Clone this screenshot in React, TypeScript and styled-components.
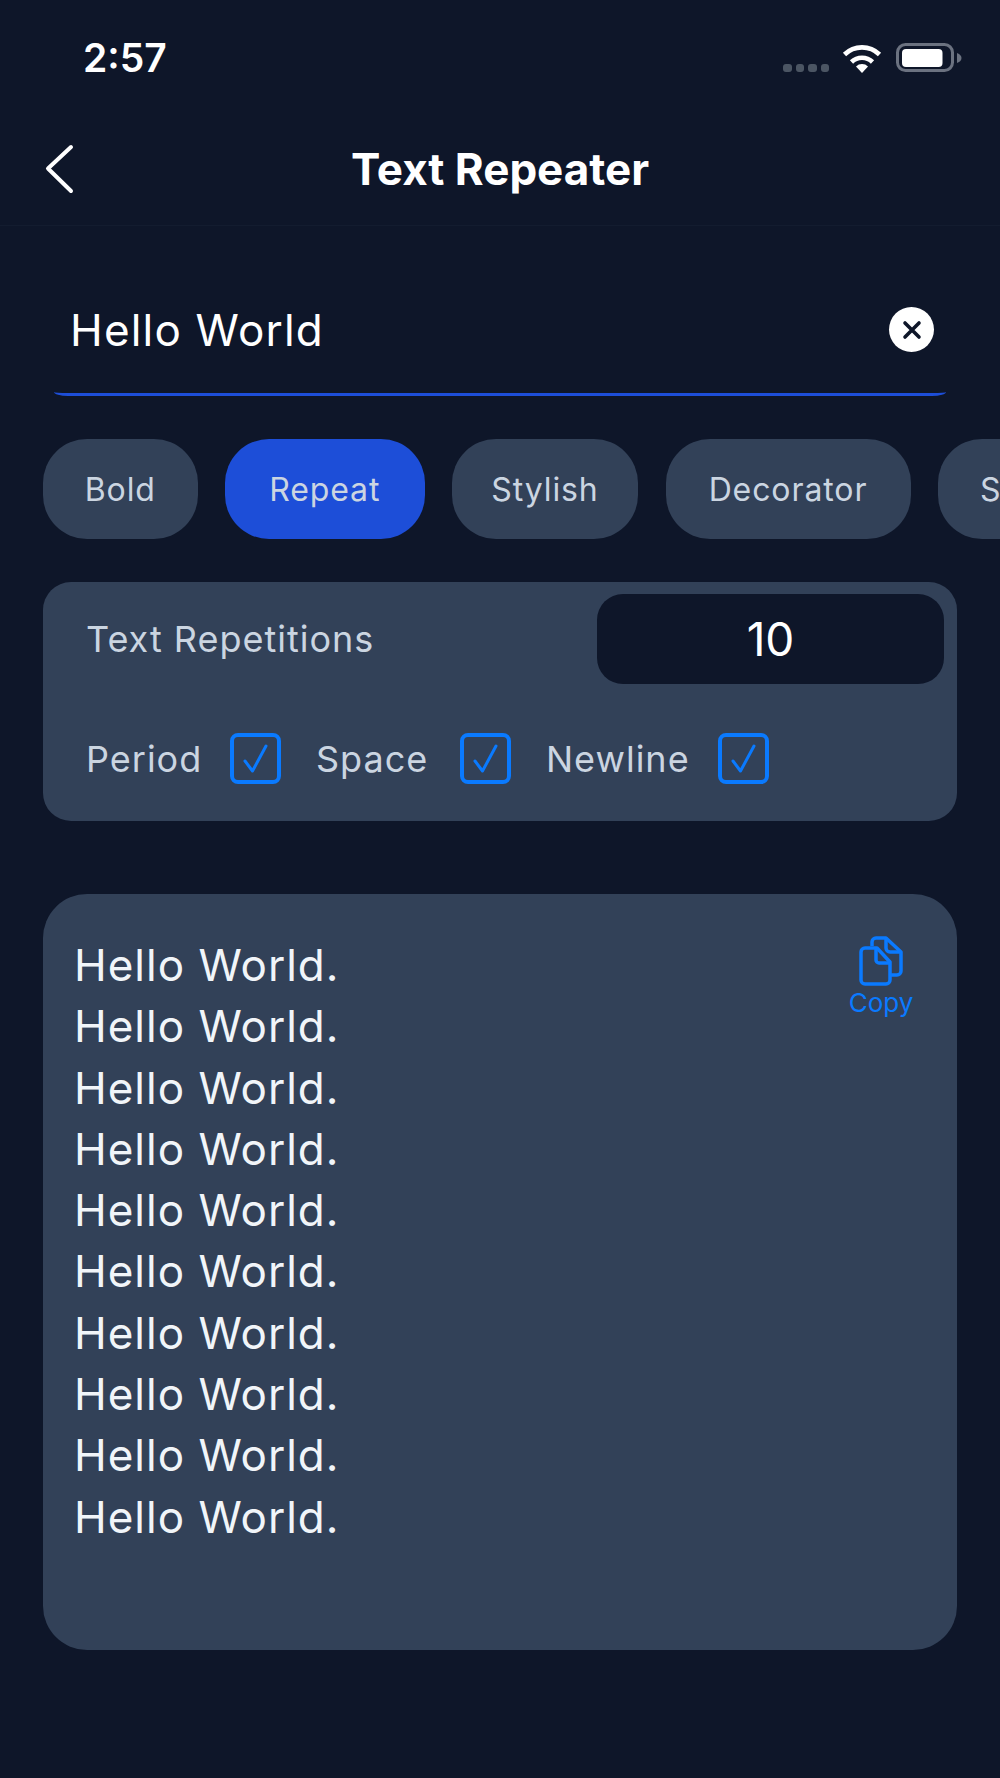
import React from 'react'
import styled, { createGlobalStyle } from 'styled-components'

const GlobalStyle = createGlobalStyle`
  html, body {
    margin: 0;
    padding: 0;
    background: #0e1629;
  }
  * {
    box-sizing: border-box;
  }
`

const bodyFont = `'Inter', 'Open Sans', sans-serif`
const systemFont = `'Inter', 'Liberation Sans', sans-serif`

const Screen = styled.div`
  width: 1000px;
  height: 1778px;
  overflow: hidden;
  background: #0e1629;
  font-family: ${bodyFont};
  font-weight: 400;
`

const StatusBar = styled.div`
  height: 116px;
  display: flex;
  justify-content: space-between;
  align-items: flex-start;
  padding: 36px 38px 0 83px;
`

const Time = styled.div`
  font-family: ${systemFont};
  font-weight: 600;
  font-size: 39px;
  line-height: 44px;
  color: #fff;
`

const StatusIcons = styled.div`
  display: flex;
  align-items: flex-end;
  padding-top: 7px;
`

const SignalDots = styled.div`
  display: flex;
  gap: 4px;
  margin-right: 13px;
  margin-bottom: 1px;
`

const Dot = styled.span`
  width: 8.5px;
  height: 8px;
  border-radius: 3px;
  background: #4b5563;
`

const NavBar = styled.div`
  height: 110px;
  position: relative;
  display: flex;
  align-items: center;
  justify-content: center;
  border-bottom: 1px solid #131c2f;
  padding-bottom: 4px;
`

const BackIcon = styled.svg`
  position: absolute;
  left: 44px;
  top: 28px;
`

const Title = styled.h1`
  margin: 0;
  font-family: ${systemFont};
  font-weight: 700;
  font-size: 44px;
  line-height: 50px;
  color: #fff;
`

const InputRow = styled.div`
  margin: 0 54px;
  height: 170px;
  padding: 73px 12px 0 16px;
  display: flex;
  align-items: flex-start;
  justify-content: space-between;
  border-bottom: 3px solid #1d4ed8;
  border-radius: 0 0 14px 14px / 0 0 4px 4px;
`

const InputText = styled.div`
  font-size: 44px;
  line-height: 62px;
  letter-spacing: 1.2px;
  color: #fff;
`

const ClearButton = styled.div`
  width: 45px;
  height: 45px;
  margin-top: 8px;
  border-radius: 50%;
  background: #fff;
  display: flex;
  align-items: center;
  justify-content: center;
`

const Chips = styled.div`
  display: flex;
  gap: 27.5px;
  margin-top: 43px;
  padding-left: 43px;
  overflow: hidden;
`

const Chip = styled.div<{ $active?: boolean; $w: number }>`
  flex-shrink: 0;
  width: ${(p) => p.$w}px;
  height: 100px;
  border-radius: 44px;
  display: flex;
  align-items: center;
  justify-content: center;
  font-size: 32px;
  letter-spacing: 0.9px;
  color: #cbd5e1;
  background: ${(p) => (p.$active ? '#1d4ed8' : '#324158')};
`

const OptionsPanel = styled.div`
  margin: 43px 43px 0;
  height: 239px;
  background: #324158;
  border-radius: 28px;
  padding: 12px 13px 0 43px;
`

const RepetitionRow = styled.div`
  display: flex;
  align-items: center;
  justify-content: space-between;
`

const Label = styled.div`
  font-size: 36px;
  line-height: 44px;
  letter-spacing: 1px;
  color: #cbd5e1;
`

const CountBox = styled.div`
  width: 347px;
  height: 90px;
  border-radius: 26px;
  background: #0e1629;
  color: #fff;
  font-size: 46px;
  display: flex;
  align-items: center;
  justify-content: center;
`

const CheckRow = styled.div`
  display: flex;
  align-items: center;
  margin-top: 49px;
`

const CheckLabel = styled(Label)<{ $w: number }>`
  width: ${(p) => p.$w}px;
`

const CheckBox = styled.div`
  width: 51px;
  height: 51px;
  margin-right: 35px;
  border: 4px solid #0a7aff;
  border-radius: 8px;
  display: flex;
  align-items: center;
  justify-content: center;
`

const OutputPanel = styled.div`
  position: relative;
  margin: 73px 43px 0;
  height: 756px;
  background: #324158;
  border-radius: 44px;
  padding: 41px 31px 0;
`

const OutputLine = styled.div`
  font-size: 44px;
  line-height: 61.3px;
  letter-spacing: 1px;
  color: #f1f5f9;
`

const CopyButton = styled.div`
  position: absolute;
  top: 42px;
  right: 44px;
  width: 64px;
  display: flex;
  flex-direction: column;
  align-items: center;
  color: #0a7aff;
  font-family: ${systemFont};
  font-weight: 400;
  font-size: 26px;
  line-height: 28px;
`

const CopyLabel = styled.span`
  margin-top: 3px;
`

const chips = [
  { label: 'Bold', w: 154.5 },
  { label: 'Repeat', w: 199.5, active: true },
  { label: 'Stylish', w: 186 },
  { label: 'Decorator', w: 245 },
  { label: 'Strike', w: 176 },
]

const checks = [
  { label: 'Period', w: 144 },
  { label: 'Space', w: 144 },
  { label: 'Newline', w: 172 },
]

const Wifi = () => (
  <svg width="40" height="30" viewBox="0 0 40 30" style={{ marginRight: 14 }}>
    <path d="M20 30l-6-6.5a8.5 8.5 0 0 1 12 0z" fill="#fff" />
    <path d="M9.5 19a15 15 0 0 1 21 0" fill="none" stroke="#fff" strokeWidth="4.6" />
    <path d="M2.5 11.5a25 25 0 0 1 35 0" fill="none" stroke="#fff" strokeWidth="4.6" />
  </svg>
)

const Battery = () => (
  <svg width="66" height="30" viewBox="0 0 66 30">
    <rect x="1.5" y="1.5" width="55" height="26" rx="8" fill="none" stroke="#6b7280" strokeWidth="3" />
    <rect x="6" y="6" width="40.5" height="18" rx="4" fill="#fff" />
    <path d="M61 10c3 1 4.500 3 4.500 5s-1.500 4-4.500 5z" fill="#6b7280" />
  </svg>
)

const Tick = () => (
  <svg width="30" height="32" viewBox="0 0 30 32" fill="none">
    <path d="M4 18l7.500 10L25 3" stroke="#0a7aff" strokeWidth="3" strokeLinecap="round" strokeLinejoin="round" />
  </svg>
)

const CopyIcon = () => (
  <svg width="44" height="50" viewBox="0 0 44 50" fill="none" stroke="#0a7aff" strokeWidth="3.500" strokeLinejoin="round">
    <path d="M13 10V6a4 4 0 0 1 4-4h10l15 14v19a4 4 0 0 1-4 4h-6" />
    <path d="M27 2v10a4 4 0 0 0 4 4h11" />
    <path d="M6 12h12l13 14v18a4 4 0 0 1-4 4H6a4 4 0 0 1-4-4V16a4 4 0 0 1 4-4z" />
    <path d="M17 12v12a3 3 0 0 0 3 3h11" />
  </svg>
)

export default function App() {
  return (
    <Screen>
      <GlobalStyle />
      <StatusBar>
        <Time>2:57</Time>
        <StatusIcons>
          <SignalDots>
            <Dot />
            <Dot />
            <Dot />
            <Dot />
          </SignalDots>
          <Wifi />
          <Battery />
        </StatusIcons>
      </StatusBar>
      <NavBar>
        <BackIcon width="30" height="50" viewBox="0 0 30 50" fill="none">
          <path d="M27 3L4 24.500 27 47" stroke="#fff" strokeWidth="4" strokeLinecap="round" strokeLinejoin="round" />
        </BackIcon>
        <Title>Text Repeater</Title>
      </NavBar>
      <InputRow>
        <InputText>Hello World</InputText>
        <ClearButton>
          <svg width="20" height="20" viewBox="0 0 20 20">
            <path d="M3 3l14 14M17 3L3 17" stroke="#0e1629" strokeWidth="3.600" strokeLinecap="round" />
          </svg>
        </ClearButton>
      </InputRow>
      <Chips>
        {chips.map((chip) => (
          <Chip key={chip.label} $w={chip.w} $active={chip.active}>
            {chip.label}
          </Chip>
        ))}
      </Chips>
      <OptionsPanel>
        <RepetitionRow>
          <Label>Text Repetitions</Label>
          <CountBox>10</CountBox>
        </RepetitionRow>
        <CheckRow>
          {checks.map((check) => (
            <React.Fragment key={check.label}>
              <CheckLabel $w={check.w}>{check.label}</CheckLabel>
              <CheckBox>
                <Tick />
              </CheckBox>
            </React.Fragment>
          ))}
        </CheckRow>
      </OptionsPanel>
      <OutputPanel>
        {Array.from({ length: 10 }, (_, i) => (
          <OutputLine key={i}>Hello World.</OutputLine>
        ))}
        <CopyButton>
          <CopyIcon />
          <CopyLabel>Copy</CopyLabel>
        </CopyButton>
      </OutputPanel>
    </Screen>
  )
}
